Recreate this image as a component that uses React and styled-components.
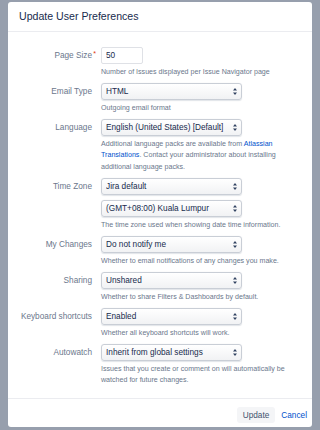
import React from 'react'
import styled, { createGlobalStyle } from 'styled-components'

const Global = createGlobalStyle`
  html, body {
    margin: 0;
    padding: 0;
    background: #979fad;
  }
  body {
    padding: 2px 0 0;
    font-family: "Liberation Sans", Arial, sans-serif;
  }
  * { box-sizing: border-box; }
`;

const Dialog = styled.div`
  width: 304px;
  margin: 0 auto;
  background: #fff;
  border-radius: 3px;
  overflow: hidden;
`;

const Header = styled.div`
  height: 30px;
  display: flex;
  align-items: center;
  padding: 0 11px 1px;
  border-bottom: 1px solid #ebecf0;
`;

const Title = styled.h2`
  margin: 0;
  font-size: 10.6px;
  font-weight: 400;
  color: #172b4d;
`;

const Body = styled.form`
  padding: 15px 11px 11.5px;
`;

const Field = styled.div`
  display: grid;
  grid-template-columns: 73px 200px;
  column-gap: 9px;
  margin-bottom: ${p => (p.$last ? 0 : '5px')};
`;

const Label = styled.label`
  position: relative;
  justify-self: end;
  line-height: 17px;
  font-size: 8.25px;
  color: #6b778c;
  white-space: nowrap;
`;

const Star = styled.span`
  position: absolute;
  right: -4px;
  top: -2px;
  font-size: 7px;
  color: #de350b;
`;

const Controls = styled.div`
  display: flex;
  flex-direction: column;
  align-items: flex-start;
`;

const TextInput = styled.input`
  width: 42px;
  height: 17px;
  padding: 0 4px;
  border: 1px solid #dfe1e6;
  border-radius: 2px;
  font-family: inherit;
  font-size: 8.25px;
  color: #172b4d;
  background: #fff;
  outline: none;
`;

const SelectWrap = styled.div`
  position: relative;
  width: 141px;
  margin-top: ${p => (p.$stacked ? '5px' : 0)};
`;

const Select = styled.select`
  appearance: none;
  -webkit-appearance: none;
  display: block;
  width: 100%;
  height: 17px;
  padding: 0 12px 0 4px;
  border: 1px solid #c9ced6;
  border-radius: 3px;
  background: linear-gradient(#ffffff, #f1f2f4);
  box-shadow: 0 0.5px 1px rgba(9, 30, 66, 0.12);
  font-family: inherit;
  font-size: 8.25px;
  color: #172b4d;
  outline: none;
`;

const Arrows = styled.svg`
  position: absolute;
  right: 5px;
  top: 5px;
  pointer-events: none;
`;

const Desc = styled.div`
  margin-top: 2.5px;
  font-size: 7.1px;
  line-height: 11.5px;
  color: #6b778c;
  max-width: 200px;
`;

const Link = styled.a`
  color: #0052cc;
  text-decoration: none;
`;

const Footer = styled.div`
  display: flex;
  justify-content: flex-end;
  align-items: center;
  gap: 1px;
  padding: 8px 0 4px;
  border-top: 1px solid #ebecf0;
`;

const Button = styled.button`
  height: 16px;
  padding: 0 ${p => (p.$link ? '5px' : '6px')};
  border: none;
  border-radius: 3px;
  background: ${p => (p.$link ? 'transparent' : '#f4f5f7')};
  color: ${p => (p.$link ? '#0052cc' : '#42526e')};
  font-family: inherit;
  font-size: 8.25px;
  cursor: pointer;
`;

const Dropdown = ({ value, stacked }) => (
  <SelectWrap $stacked={stacked}>
    <Select defaultValue={value}>
      <option>{value}</option>
    </Select>
    <Arrows width="4" height="7" viewBox="0 0 4 7">
      <path d="M2 0 L4 2.6 H0 Z M2 7 L4 4.4 H0 Z" fill="#344563" />
    </Arrows>
  </SelectWrap>
)

const App = () => {
  return (
    <>
      <Global />
      <Dialog>
        <Header>
          <Title>Update User Preferences</Title>
        </Header>
        <Body>
          <Field>
            <Label>Page Size<Star>*</Star></Label>
            <Controls>
              <TextInput defaultValue="50" />
              <Desc>Number of Issues displayed per Issue Navigator page</Desc>
            </Controls>
          </Field>
          <Field>
            <Label>Email Type</Label>
            <Controls>
              <Dropdown value="HTML" />
              <Desc>Outgoing email format</Desc>
            </Controls>
          </Field>
          <Field>
            <Label>Language</Label>
            <Controls>
              <Dropdown value="English (United States) [Default]" />
              <Desc>
                Additional language packs are available from <Link href="#">Atlassian Translations</Link>. Contact your administrator about installing additional language packs.
              </Desc>
            </Controls>
          </Field>
          <Field>
            <Label>Time Zone</Label>
            <Controls>
              <Dropdown value="Jira default" />
              <Dropdown value="(GMT+08:00) Kuala Lumpur" stacked />
              <Desc>The time zone used when showing date time information.</Desc>
            </Controls>
          </Field>
          <Field>
            <Label>My Changes</Label>
            <Controls>
              <Dropdown value="Do not notify me" />
              <Desc>Whether to email notifications of any changes you make.</Desc>
            </Controls>
          </Field>
          <Field>
            <Label>Sharing</Label>
            <Controls>
              <Dropdown value="Unshared" />
              <Desc>Whether to share Filters &amp; Dashboards by default.</Desc>
            </Controls>
          </Field>
          <Field>
            <Label>Keyboard shortcuts</Label>
            <Controls>
              <Dropdown value="Enabled" />
              <Desc>Whether all keyboard shortcuts will work.</Desc>
            </Controls>
          </Field>
          <Field $last>
            <Label>Autowatch</Label>
            <Controls>
              <Dropdown value="Inherit from global settings" />
              <Desc>Issues that you create or comment on will automatically be watched for future changes.</Desc>
            </Controls>
          </Field>
        </Body>
        <Footer>
          <Button type="button">Update</Button>
          <Button type="button" $link>Cancel</Button>
        </Footer>
      </Dialog>
    </>
  )
}

export default App
